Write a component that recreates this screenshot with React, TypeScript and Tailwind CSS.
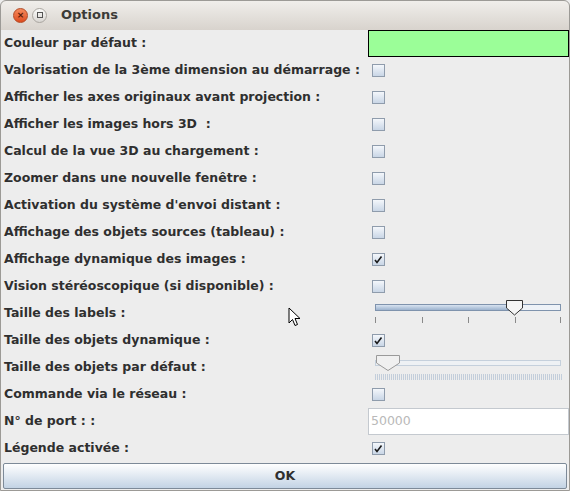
import React from "react";

const rows: { label: string; kind: string; checked?: boolean }[] = [
  { label: "Couleur par défaut :", kind: "color" },
  { label: "Valorisation de la 3ème dimension au démarrage :", kind: "cb" },
  { label: "Afficher les axes originaux avant projection :", kind: "cb" },
  { label: "Afficher les images hors 3D  :", kind: "cb" },
  { label: "Calcul de la vue 3D au chargement :", kind: "cb" },
  { label: "Zoomer dans une nouvelle fenêtre :", kind: "cb" },
  { label: "Activation du système d'envoi distant :", kind: "cb" },
  { label: "Affichage des objets sources (tableau) :", kind: "cb" },
  { label: "Affichage dynamique des images :", kind: "cb", checked: true },
  { label: "Vision stéréoscopique (si disponible) :", kind: "cb" },
  { label: "Taille des labels :", kind: "slider1" },
  { label: "Taille des objets dynamique :", kind: "cb", checked: true },
  { label: "Taille des objets par défaut :", kind: "slider2" },
  { label: "Commande via le réseau :", kind: "cb" },
  { label: "N° de port : :", kind: "input" },
  { label: "Légende activée :", kind: "cb", checked: true },
];

function Checkbox({ checked }: { checked?: boolean }) {
  return (
    <div className="w-[13px] h-[13px] border border-[#8f9cac] bg-gradient-to-b from-[#f4f7fb] to-[#c9d6e6] flex items-center justify-center">
      {checked && (
        <svg width="9" height="9" viewBox="0 0 9 9">
          <path d="M1 5 L3 7.5 L7.5 1.5" stroke="#1a1a1a" strokeWidth="1.6" fill="none" />
        </svg>
      )}
    </div>
  );
}

function Slider1() {
  return (
    <div className="relative w-[190px] h-[27px] ml-[7px]">
      <div className="absolute left-0 top-[4px] w-[186px] h-[7px] border border-[#7f93ad] bg-[#eef2f7]">
        <div className="h-full w-[136px] bg-gradient-to-b from-[#d8e3f0] to-[#9db3cf]" />
      </div>
      <svg className="absolute left-[130px] top-[-1px]" width="20" height="18" viewBox="0 0 20 18">
        <path d="M1.5 1.5 H17.5 V9 L9.5 16 L1.5 9 Z" fill="#f5f5f5" stroke="#333" strokeWidth="1" />
      </svg>
      {[0, 46.5, 93, 140, 185].map((x, i) => (
        <div key={i} className="absolute top-[17px] w-px h-[6px] bg-[#8a8a8a]" style={{ left: x }} />
      ))}
    </div>
  );
}

function Slider2() {
  return (
    <div className="relative w-[190px] h-[27px] ml-[7px]">
      <div className="absolute left-0 top-[6px] w-[186px] h-[6px] border border-[#c5d0dc] bg-[#eef1f4]" />
      <svg className="absolute left-[0px] top-[0px]" width="26" height="18" viewBox="0 0 26 18">
        <path d="M1.5 1.5 H24.5 V9 L13 16.5 L1.5 9 Z" fill="#f0f0f0" stroke="#9a9a9a" strokeWidth="1" />
      </svg>
      <div className="absolute left-0 top-[20px] w-[187px] h-[6px] bg-[repeating-linear-gradient(90deg,#c3cedb_0px,#c3cedb_1px,transparent_1px,transparent_2px)]" />
    </div>
  );
}

export default function App() {
  return (
    <div
      className="relative w-[570px] h-[491px] bg-[#ededed] overflow-hidden"
      style={{ fontFamily: '"DejaVu Sans", sans-serif' }}
    >
      <div className="absolute inset-0 rounded-t-[6px] border border-[#9c9a96] pointer-events-none" />
      {/* title bar */}
      <div className="h-[30px] rounded-t-[6px] bg-gradient-to-b from-[#f1efec] to-[#d8d3cd] flex items-center">
        <div className="ml-[13px] w-[15px] h-[15px] rounded-full bg-gradient-to-b from-[#f58a5c] to-[#dd4a1c] border border-[#b24a25] flex items-center justify-center">
          <span className="text-[9px] leading-none text-[#5a1a05] font-bold">×</span>
        </div>
        <div className="ml-[4px] w-[15px] h-[15px] rounded-full bg-gradient-to-b from-[#fbfbfa] to-[#d9d6d2] border border-[#aaa6a0] flex items-center justify-center">
          <div className="w-[6px] h-[6px] border border-[#555]" />
        </div>
        <span className="ml-[14px] text-[13px] font-bold text-[#3c3b37]">Options</span>
      </div>
      {/* content */}
      <div className="pl-[4px] pr-[1px]">
        {rows.map((r, i) => (
          <div key={i} className="flex items-center h-[27px]">
            <div className="w-[364px] text-[12.5px] font-bold text-[#2f2f2f] whitespace-pre">{r.label}</div>
            <div className="flex-1 h-full flex items-center">
              {r.kind === "color" && (
                <div className="w-full h-[27px] bg-[#9bfe98] border border-black" />
              )}
              {r.kind === "cb" && (
                <div className="ml-[4px]">
                  <Checkbox checked={r.checked} />
                </div>
              )}
              {r.kind === "slider1" && <Slider1 />}
              {r.kind === "slider2" && <Slider2 />}
              {r.kind === "input" && (
                <div className="w-full h-[27px] bg-white border border-[#c4c9cf] flex items-center pl-[2px] text-[12.5px] text-[#b9b9b9]">
                  50000
                </div>
              )}
            </div>
          </div>
        ))}
      </div>
      <div className="mx-[3px] mt-[1px] h-[26px] border border-[#7d8a98] rounded-[2px] bg-gradient-to-b from-[#ffffff] to-[#c3d3e4] flex items-center justify-center text-[12.5px] font-bold text-[#2f2f2f]">
        OK
      </div>
      {/* mouse cursor */}
      <svg className="absolute left-[288px] top-[307px]" width="14" height="21" viewBox="0 0 14 21">
        <path d="M1 1 V16 L4.5 12.5 L7 18.5 L9.5 17.5 L7 11.5 L12 11.5 Z" fill="#fff" stroke="#000" strokeWidth="1" strokeLinejoin="round" />
      </svg>
    </div>
  );
}
